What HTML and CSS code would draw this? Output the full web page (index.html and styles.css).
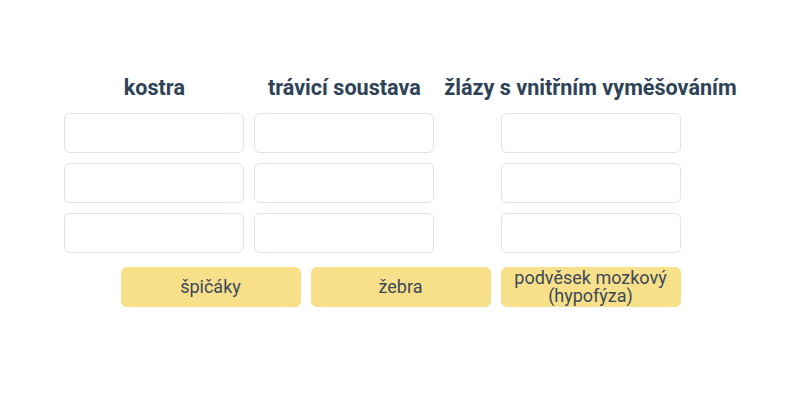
FILE: index.html
```html
<!DOCTYPE html>
<html lang="cs">
<head>
<meta charset="utf-8">
<link rel="stylesheet" href="styles.css">
</head>
<body>
<div class="board">
  <div class="columns">
    <div class="col">
      <h2 class="title">kostra</h2>
      <div class="slot"></div>
      <div class="slot"></div>
      <div class="slot"></div>
    </div>
    <div class="col">
      <h2 class="title">trávicí soustava</h2>
      <div class="slot"></div>
      <div class="slot"></div>
      <div class="slot"></div>
    </div>
    <div class="col">
      <h2 class="title">žlázy s vnitřním vyměšováním</h2>
      <div class="slot"></div>
      <div class="slot"></div>
      <div class="slot"></div>
    </div>
  </div>
  <div class="pool">
    <div class="card">špičáky</div>
    <div class="card">žebra</div>
    <div class="card">podvěsek mozkový (hypofýza)</div>
  </div>
</div>
</body>
</html>
```
FILE: styles.css
```css
html, body {
  margin: 0;
  padding: 0;
  background: #ffffff;
  font-family: Roboto, "Noto Sans", sans-serif;
}
.board {
  width: 800px;
  height: 400px;
  padding: 75px 0 0 1px;
  box-sizing: border-box;
  display: flex;
  flex-direction: column;
  align-items: center;
}
.columns {
  display: flex;
  gap: 10px;
  justify-content: center;
}
.col {
  display: flex;
  flex-direction: column;
  align-items: center;
  gap: 10px;
}
.title {
  margin: 0 0 2px 0;
  font-size: 21.6px;
  line-height: 26px;
  font-weight: 700;
  color: #2e4358;
  white-space: nowrap;
}
.slot {
  width: 180px;
  height: 40px;
  box-sizing: border-box;
  border: 1px solid #dfe4e8;
  border-radius: 6px;
  background: #fff;
}
.pool {
  display: flex;
  gap: 10px;
  margin-top: 14px;
  justify-content: center;
}
.card {
  width: 180px;
  height: 40px;
  box-sizing: border-box;
  background: #f8e08a;
  border-radius: 6px;
  display: flex;
  align-items: center;
  justify-content: center;
  text-align: center;
  font-size: 18px;
  line-height: 18px;
  color: #3b4858;
  padding: 0 6px;
}
```
